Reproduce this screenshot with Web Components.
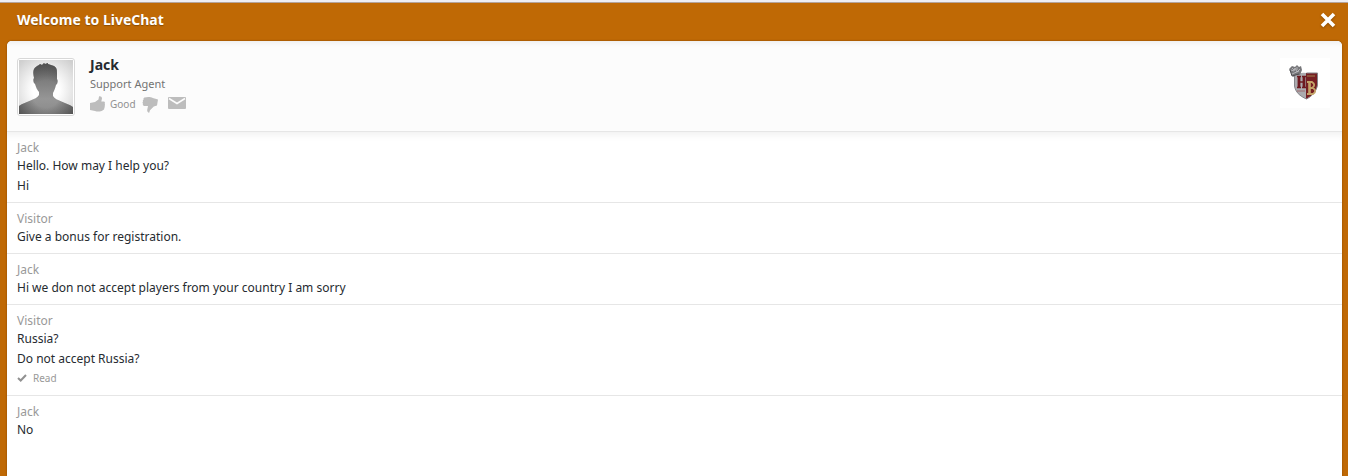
<!DOCTYPE html>
<html lang="en">
<head>
<meta charset="utf-8">
<title>LiveChat</title>
<style>
html, body { margin: 0; height: 100%; }
body { font-family: "Noto Sans", "Open Sans", sans-serif; font-size: 12px; color: #262b30; background: #bf6905; }
</style>
</head>
<body>
<live-chat heading="Welcome to LiveChat">
  <chat-agent slot="agent" name="Jack" role-title="Support Agent"></chat-agent>
  <chat-message author="Jack"><p>Hello. How may I help you?</p><p>Hi</p></chat-message>
  <chat-message author="Visitor"><p>Give a bonus for registration.</p></chat-message>
  <chat-message author="Jack"><p>Hi we don not accept players from your country I am sorry</p></chat-message>
  <chat-message author="Visitor" read><p>Russia?</p><p>Do not accept Russia?</p></chat-message>
  <chat-message author="Jack"><p>No</p></chat-message>
</live-chat>

<template id="live-chat">
<style>
:host { display: flex; flex-direction: column; box-sizing: border-box; min-height: 100vh; border-top: 2px solid #eeeef3; background: #bf6905; }
header { display: flex; align-items: center; justify-content: space-between; height: 38px; padding: 0 12px 0 17px; border-top: 1px solid #b5a49b; }
h1 { margin: 0; padding-bottom: 4px; font-size: 14px; line-height: 20px; font-weight: 700; color: #fff; text-shadow: 0 1px 1px #8a4b00; }
button { display: block; padding: 0 0 4px; border: 0; background: none; }
svg { display: block; filter: drop-shadow(0 1px 1px #8a4b00); }
main { flex: 1; margin: 0 6px 0 7px; border-radius: 5px 5px 0 0; background: #fff; overflow: hidden; box-shadow: 0 0 2px #7d4300; }
.log { box-shadow: inset 0 8px 8px -6px #eeeeee; }
</style>
<header><h1></h1><button type="button" aria-label="Close"><svg width="16" height="16" viewBox="0 0 16 16"><path d="M2 2 14 14M14 2 2 14" stroke="#fff" stroke-width="3.600"/></svg></button></header>
<main><slot name="agent"></slot><section class="log" aria-label="Messages"><slot></slot></section></main>
</template>

<template id="chat-agent">
<style>
:host { display: flex; align-items: flex-start; box-sizing: border-box; height: 91px; padding: 17px 12px 0 10px; border-bottom: 1px solid #e6e6e6; background: #fcfcfc; box-shadow: inset 0 5px 5px -3px #eeeeee; }
svg { display: block; }
.avatar { border: 1px solid #d8d8d8; border-radius: 3px; padding: 1px; background: #fff; }
.info { flex: 1; margin-left: 15px; }
h2 { margin: 0; padding-bottom: 2px; font-size: 14px; line-height: 14px; font-weight: 700; }
p { margin: 0; font-size: 11px; line-height: 20px; color: #737373; }
.rate { display: flex; align-items: center; height: 20px; color: #919191; }
button { display: flex; align-items: center; gap: 5px; margin: 0; padding: 0; border: 0; background: none; font: inherit; font-size: 10px; color: inherit; }
.down { margin-left: 6px; }
.mail { margin-left: 10px; padding-bottom: 2px; }
</style>
<div class="avatar"><svg width="54" height="54" viewBox="0 0 54 54" role="img" aria-label="Agent">
<defs><radialGradient id="bg" cx=".5" cy=".55" r=".7"><stop offset=".35" stop-color="#fff"/><stop offset="1" stop-color="#cfcfcf"/></radialGradient>
<linearGradient id="skin" gradientUnits="userSpaceOnUse" x1="0" y1="4" x2="0" y2="54"><stop stop-color="#686868"/><stop offset=".7" stop-color="#969696"/><stop offset="1" stop-color="#8a8a8a"/></linearGradient>
<radialGradient id="shade" gradientUnits="userSpaceOnUse" cx="27" cy="34" r="34"><stop offset=".4" stop-color="#444" stop-opacity="0"/><stop offset="1" stop-color="#444" stop-opacity=".8"/></radialGradient>
<path id="man" d="M0 54v-8C7 41 17 40 20 35v-3c-2-2-3-5-4-8-2-1-2-5-1-6-1-4-1-7 0-9 1-2 3-3 5-4l1-1 2 1 2-2 1 1 3-1v1l3 1 3 1c3 2 3 4 3 7v6c1 1 1 5-1 6-1 4-2 6-3 8v3c3 5 13 6 20 11v8z"/></defs>
<path fill="url(#bg)" d="M0 0h54v54H0z"/>
<use href="#man" fill="url(#skin)"/><use href="#man" fill="url(#shade)"/>
</svg></div>
<div class="info"><h2></h2><p></p>
<div class="rate">
<button type="button"><svg width="15" height="16" viewBox="0 0 15 16"><path fill="#bdbdbd" d="M0 7 5 6 8.500 3.500 9 .5C10-.3 12 .6 12 2.400L11.300 5.500H14c1 .4 1.300 1.600.6 2.300.6.8.5 1.600 0 2.100.4.8.2 1.500-.4 2 .3.800-.1 1.700-1 2-2 1.700-5.400 2.200-8.200 1.100L0 14z"/></svg><span>Good</span></button>
<button type="button" class="down" aria-label="Bad"><svg width="16" height="17" viewBox="0 0 16 17"><path fill="#bdbdbd" d="M16 3.500 10.800 2C8.600.7 5 .7 2.600 1.600c-1 .3-1.300 1.200-1 1.900-.8.5-1 1.300-.5 2-.8.8-.6 1.600-.1 2.100-.5 1 .1 2.100 1 2.300h4L5.200 14c-.2 1.300.6 2.500 2 2.700l.8-2.500 3.800-3.800L15 9.500z"/></svg></button>
<button type="button" class="mail" aria-label="Email"><svg width="18" height="12" viewBox="0 0 18 12"><rect width="18" height="12" rx="1" fill="#bdbdbd"/><path d="m1 1.500 8 5 8-5" fill="none" stroke="#fcfcfc" stroke-width="1.500"/></svg></button>
</div></div>
<svg width="50" height="50" viewBox="0 0 50 50" role="img" aria-label="Club crest">
<path fill="#fff" d="M0 0h50v50H0z"/>
<path fill="#ababaf" d="M14.500 17q6-3 12-2v26c-7-3-11-7-12-13z"/>
<path fill="#761f23" d="M26 15h11.500v12c-1 6-5 11-11.500 14z"/>
<path d="M14.500 17v11c1 6 5 10 12 13 6-3 10-8 11-14V15h-11" fill="none" stroke="#85858a"/>
<path d="M19 18v12M24 18v12" fill="none" stroke="#6d1a20" stroke-width="2.800"/>
<path d="M17 18.500h4M22 18.500h4M17 29.500h4M22 29.500h4M19 24h5" fill="none" stroke="#6d1a20" stroke-width="1.400"/>
<path d="M17 33h8" stroke="#9e6b6e"/><path d="M27 18h8" stroke="#a2844e"/>
<path d="M27 24h5q4.500 3 0 6h-2 3q4.500 3 0 6h-6" fill="none" stroke="#c3a369" stroke-width="1.800"/>
<path d="M29.500 24v12" stroke="#c3a369" stroke-width="2.600"/>
<path fill="#77777a" d="m9 11 3-3 3 1 2-2 2 2 2-1 1 4-2 5q-4-1-7 2z"/>
<path d="m11 12 3 1 1-3 2 4 3-3M12 16l7-3M12 10l2 2M17 9v3" fill="none" stroke="#c4c4c8" stroke-width=".8"/>
<path d="m10 12 2 6 7-2" fill="none" stroke="#4d4d50"/>
</svg>
</template>

<template id="chat-message">
<style>
:host { display: block; padding: 7px 10px 6px; border-bottom: 1px solid #e6e6e6; line-height: 20px; }
:host(:last-of-type) { border-bottom: 0; }
h3 { margin: 0; font-size: 12px; font-weight: 400; line-height: 17px; color: #999; }
::slotted(p) { margin: 0; font-size: 12px; line-height: 20px; }
.read { display: none; align-items: center; gap: 6px; height: 18px; padding-bottom: 2px; font-size: 10px; color: #999; }
:host([read]) .read { display: flex; }
</style>
<article><h3></h3><slot></slot><div class="read"><svg width="10" height="8" viewBox="0 0 10 8"><path d="m1 4 2.700 2.500L9 1" fill="none" stroke="#919191" stroke-width="2"/></svg><span>Read</span></div></article>
</template>

<script>
class ChatElement extends HTMLElement {
  connectedCallback() {
    if (this.shadowRoot) return;
    const root = this.attachShadow({ mode: "open" });
    root.append(document.getElementById(this.localName).content.cloneNode(true));
    this.fill(root);
  }
}
class LiveChat extends ChatElement {
  fill(root) { root.querySelector("h1").textContent = this.getAttribute("heading"); }
}
class ChatAgent extends ChatElement {
  fill(root) {
    root.querySelector("h2").textContent = this.getAttribute("name");
    root.querySelector("p").textContent = this.getAttribute("role-title");
  }
}
class ChatMessage extends ChatElement {
  fill(root) { root.querySelector("h3").textContent = this.getAttribute("author"); }
}
customElements.define("live-chat", LiveChat);
customElements.define("chat-agent", ChatAgent);
customElements.define("chat-message", ChatMessage);
</script>
</body>
</html>
